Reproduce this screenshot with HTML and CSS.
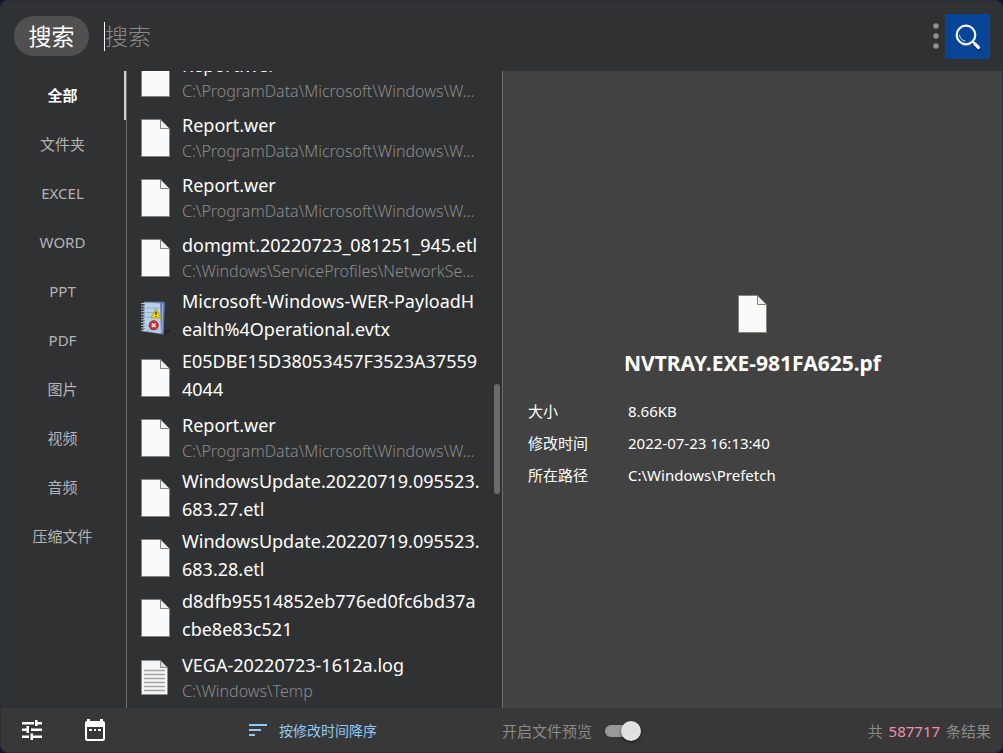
FILE: index.html
```html
<!DOCTYPE html>
<html lang="zh-CN">
<head>
    <meta charset="UTF-8">
    <meta name="viewport" content="width=device-width, initial-scale=1.0">
    <title>搜索</title>
    <link rel="stylesheet" href="styles.css">
</head>
<body>
    <!-- Icons shared by the list and the preview -->
    <svg class="sprite" aria-hidden="true">
        <symbol id="file" viewBox="0 0 29 38">
            <path d="M.5 .5H19.5L28.5 9.5V37.5H.5Z" fill="#fafafa" stroke="#85837f"/>
            <path d="M19.5 .5V9.5H28.5Z" fill="#ededed" stroke="#85837f"/>
        </symbol>
        <symbol id="log" viewBox="0 0 29 38">
            <path d="M.5 1.5H19.5L26.5 8.5V35.5H.5Z" fill="#f5f5f5" stroke="#8c8c8c"/>
            <path d="M19.5 1.5V8.5H26.5Z" fill="#dedede" stroke="#8c8c8c"/>
            <path d="M3 11.5H24M3 15.5H24M3 19.5H24M3 23.5H24M3 27.5H24M3 31.5H24" stroke="#a3a3a3" stroke-width="1.5"/>
        </symbol>
        <symbol id="evtx" viewBox="0 0 32 38">
            <path d="M25 33L31 31L32 34L25 38Z" fill="#202224"/>
            <path d="M3 1L24 1Q26 1 26 3L25 36Q25 38 23 37L2 34Z" fill="#7389b6"/>
            <path d="M4 2L21 3L22 36L3 33Z" fill="#b9d2ea"/>
            <path d="M22 2L26 1L25 37L22 36Z" fill="#5873ae"/>
            <path d="M24 3L23 35" stroke="#aec4e8"/>
            <path d="M6 8H20M6 13H20M6 18H20M6 28H20M6 32H20" stroke="#8ba9cc"/>
            <path d="M3 3V33" stroke="#43536f" stroke-width="3" stroke-dasharray="1 2"/>
            <path d="M0 3H5M0 6H5M0 9H5M0 12H5M0 15H5M0 18H5M0 21H5M0 24H5M0 27H5M0 30H5M0 33H5" stroke="#c2ccd9"/>
            <path d="M16.5 9L22 19H11Z" fill="#f7d414" stroke="#bd9800"/>
            <path d="M16.5 12V15.5M16.5 17V18" stroke="#222" stroke-width="1.5"/>
            <circle cx="14" cy="27" r="5" fill="#d52f2f" stroke="#a32227"/>
            <path d="M12 25L16 29M16 25L12 29" stroke="#fff" stroke-width="1.5"/>
        </symbol>
    </svg>

    <div class="window">
        <header class="topbar">
            <button class="chip">搜索</button>
            <input class="search-input" type="text" placeholder="搜索" aria-label="搜索">
            <button class="more" aria-label="更多">
                <svg width="6" height="26" viewBox="0 0 6 26" fill="#929292"><circle cx="3" cy="3" r="2.7"/><circle cx="3" cy="13" r="2.7"/><circle cx="3" cy="23" r="2.7"/></svg>
            </button>
            <button class="logo" aria-label="开始搜索">
                <svg width="45" height="45" viewBox="0 0 45 45" fill="none" stroke-linecap="round">
                    <path d="M29 30L34 35" stroke="#06265d" stroke-width="4"/>
                    <circle cx="21" cy="21" r="9.3" stroke="#f5f7fa" stroke-width="2.2"/>
                    <path d="M14.5 21Q15 26 20 27" stroke="#c3d4ec" stroke-width="1"/>
                    <path d="M28 28L30 30" stroke="#f5f7fa" stroke-width="2"/>
                    <path d="M30 30L33.5 33.5" stroke="#f5f7fa" stroke-width="3.2"/>
                </svg>
            </button>
        </header>

        <main class="content">
            <nav class="tabs">
                <button class="tab active">全部</button>
                <button class="tab">文件夹</button>
                <button class="tab">EXCEL</button>
                <button class="tab">WORD</button>
                <button class="tab">PPT</button>
                <button class="tab">PDF</button>
                <button class="tab">图片</button>
                <button class="tab">视频</button>
                <button class="tab">音频</button>
                <button class="tab">压缩文件</button>
            </nav>

            <section class="results">
                <ul class="list">
                    <li class="row"><svg class="icon"><use href="#file"/></svg><div class="info"><div class="name">Report.wer</div><div class="path">C:\ProgramData\Microsoft\Windows\W...</div></div></li>
                    <li class="row"><svg class="icon"><use href="#file"/></svg><div class="info"><div class="name">Report.wer</div><div class="path">C:\ProgramData\Microsoft\Windows\W...</div></div></li>
                    <li class="row"><svg class="icon"><use href="#file"/></svg><div class="info"><div class="name">Report.wer</div><div class="path">C:\ProgramData\Microsoft\Windows\W...</div></div></li>
                    <li class="row"><svg class="icon"><use href="#file"/></svg><div class="info"><div class="name">domgmt.20220723_081251_945.etl</div><div class="path">C:\Windows\ServiceProfiles\NetworkSe...</div></div></li>
                    <li class="row"><svg class="icon"><use href="#evtx"/></svg><div class="info"><div class="name long">Microsoft-Windows-WER-PayloadH<br>ealth%4Operational.evtx</div></div></li>
                    <li class="row"><svg class="icon"><use href="#file"/></svg><div class="info"><div class="name long">E05DBE15D38053457F3523A37559<br>4044</div></div></li>
                    <li class="row"><svg class="icon"><use href="#file"/></svg><div class="info"><div class="name">Report.wer</div><div class="path">C:\ProgramData\Microsoft\Windows\W...</div></div></li>
                    <li class="row"><svg class="icon"><use href="#file"/></svg><div class="info"><div class="name long">WindowsUpdate.20220719.095523.<br>683.27.etl</div></div></li>
                    <li class="row"><svg class="icon"><use href="#file"/></svg><div class="info"><div class="name long">WindowsUpdate.20220719.095523.<br>683.28.etl</div></div></li>
                    <li class="row"><svg class="icon"><use href="#file"/></svg><div class="info"><div class="name long">d8dfb95514852eb776ed0fc6bd37a<br>cbe8e83c521</div></div></li>
                    <li class="row"><svg class="icon"><use href="#log"/></svg><div class="info"><div class="name">VEGA-20220723-1612a.log</div><div class="path">C:\Windows\Temp</div></div></li>
                </ul>
                <div class="scroll-thumb"></div>
            </section>

            <section class="preview">
                <svg class="icon"><use href="#file"/></svg>
                <h1>NVTRAY.EXE-981FA625.pf</h1>
                <dl class="details">
                    <dt>大小</dt><dd>8.66KB</dd>
                    <dt>修改时间</dt><dd>2022-07-23 16:13:40</dd>
                    <dt>所在路径</dt><dd>C:\Windows\Prefetch</dd>
                </dl>
            </section>
        </main>

        <footer class="bottombar">
            <div class="tools">
                <button aria-label="设置"><svg width="24" height="24" viewBox="0 0 24 24" fill="#fff"><path d="M2 17.500v2.500h7v-2.500H2zM2 4v2.500h12V4H2zm11 18v-2h9v-2.500h-9v-2h-2.500V22H13zM6.500 8v2.500H2V13h4.500v2H9V8H6.500zM22 13v-2.500H11V13h11zm-7-5h2.500V6.500H22V4h-4.500V2H15v6z"/></svg></button>
                <button aria-label="日期"><svg width="24" height="24" viewBox="0 0 24 24" fill="#fff"><path fill-rule="evenodd" d="M4 1h3v2h10V1h3v2q2 0 2 2v16q0 2-2 2H4q-2 0-2-2V5q0-2 2-2zM4 9v11q0 1 1 1h14q1 0 1-1V9z"/><path d="M6 11h3v2H6zM11 11h2v2h-2zM15 11h3v2h-3z"/></svg></button>
            </div>
            <button class="sort">
                <svg width="18" height="12" viewBox="0 0 18 12" fill="#90caf9"><path d="M0 0h18v2H0zM0 5h12v2H0zM0 10h6v2H0z"/></svg>
                按修改时间降序
            </button>
            <label class="switch">开启文件预览<input type="checkbox" checked></label>
            <div class="total">共 <span>587717</span> 条结果</div>
        </footer>
    </div>
</body>
</html>
```
FILE: styles.css
```css
* {
    box-sizing: border-box;
}

body {
    margin: 0;
    background: #10182f;
    color: #fff;
    font-family: "Noto Sans", "Noto Sans CJK SC", sans-serif;
    font-size: 15px;
}

button {
    padding: 0;
    border: 0;
    background: none;
    color: inherit;
    font: inherit;
    cursor: pointer;
}

svg {
    display: block;
    flex: none;
}

.sprite {
    position: absolute;
    width: 0;
    height: 0;
}

.window {
    display: flex;
    flex-direction: column;
    height: 100vh;
    border: 1px solid #28303c;
    border-radius: 8px;
    background: #303133;
    overflow: hidden;
}

/* Search bar */
.topbar {
    display: flex;
    align-items: center;
    flex: none;
    height: 70px;
    padding: 0 12px 0 13px;
}

.chip {
    width: 75px;
    height: 40px;
    border-radius: 20px;
    background: #505050;
    font-size: 23px;
    line-height: 40px;
}

.search-input {
    flex: 1;
    min-width: 0;
    height: 29px;
    margin-left: 15px;
    padding: 0;
    border: 0;
    border-left: 1px solid #fff;
    outline: none;
    background: none;
    color: #fff;
    font: inherit;
    font-size: 23px;
    font-weight: 300;
}

.search-input::placeholder {
    color: #8a8a8a;
}

.more {
    margin: 0 6px 0 12px;
}

.logo {
    background: #084596;
}

/* Three columns */
.content {
    display: flex;
    flex: 1;
    min-height: 0;
}

.tabs {
    flex: none;
    width: 126px;
    border-right: 1px solid #727272;
}

.tab {
    display: block;
    width: 100%;
    height: 49px;
    padding-bottom: 2px;
    border-right: 2px solid transparent;
    color: #b4b4b4;
}

.tab.active {
    border-color: #d0d0d0;
    color: #fff;
    font-weight: 700;
}

.results {
    position: relative;
    flex: none;
    width: 376px;
    border-right: 1px solid #6c6c6c;
    overflow: hidden;
}

.list {
    display: flex;
    flex-direction: column;
    justify-content: flex-end;
    height: 100%;
    margin: 0;
    padding: 0;
    list-style: none;
}

.row {
    display: flex;
    align-items: center;
    flex: none;
    gap: 12px;
    height: 60px;
    padding-left: 14px;
}

.icon {
    width: 29px;
    height: 38px;
}

.info {
    white-space: nowrap;
}

.name {
    font-size: 18px;
    line-height: 28px;
}

.name.long {
    padding-bottom: 6px;
}

.path {
    padding-bottom: 2px;
    color: #8c8c8c;
    font-size: 16px;
    font-weight: 300;
    line-height: 24px;
}

.scroll-thumb {
    position: absolute;
    top: 313px;
    right: 2px;
    width: 6px;
    height: 110px;
    border-radius: 3px;
    background: #6b6b6b;
}

.preview {
    display: flex;
    flex-direction: column;
    align-items: center;
    justify-content: center;
    flex: 1;
    min-width: 0;
    padding-top: 6px;
    background: #424242;
}

.preview h1 {
    margin: 14px 0 16px;
    font-size: 21px;
    line-height: 32px;
}

.details {
    display: grid;
    grid-template-columns: 100px 1fr;
    align-self: stretch;
    margin: 0;
    padding: 0 25px;
    line-height: 32px;
}

.details dd {
    margin: 0;
}

/* Bottom bar */
.bottombar {
    display: grid;
    grid-template-columns: 248px 253px 1fr auto;
    align-items: center;
    flex: none;
    height: 44px;
    padding-right: 11px;
    background: #383838;
    color: #8a8a8a;
}

.tools {
    display: flex;
    gap: 39px;
    padding-left: 19px;
}

.sort {
    display: flex;
    align-items: center;
    gap: 12px;
    color: #90caf9;
    font-size: 14px;
}

.switch {
    display: flex;
    align-items: center;
    gap: 13px;
}

.switch input {
    display: flex;
    align-items: center;
    justify-content: flex-end;
    appearance: none;
    width: 33px;
    height: 12px;
    margin: 2px 0 0;
    border-radius: 6px;
    background: #999;
}

.switch input::before {
    content: "";
    flex: none;
    width: 20px;
    height: 20px;
    margin-right: -3px;
    border-radius: 50%;
    background: #e0e0e0;
    box-shadow: 0 1px 3px rgba(0, 0, 0, 0.6);
}

.total span {
    padding: 0 2px;
    color: #f48fb1;
}
```
